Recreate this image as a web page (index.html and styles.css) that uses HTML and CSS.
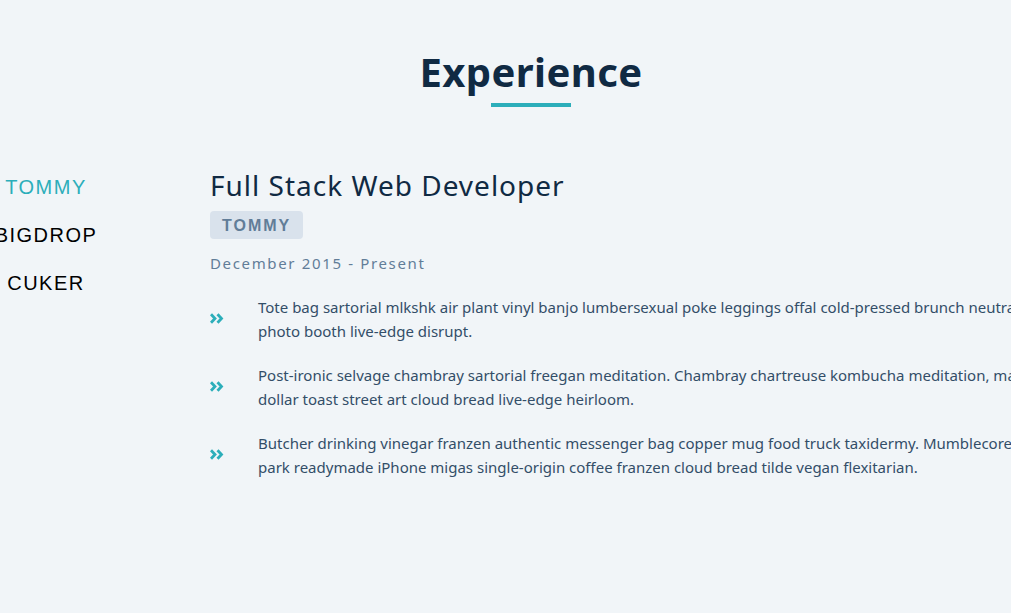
FILE: index.html
```html
<!DOCTYPE html>
<html lang="en">
<head>
<meta charset="utf-8">
<title>Experience</title>
<link rel="stylesheet" href="styles.css">
</head>
<body>
<section class="section">
  <div class="title">
    <h2>Experience</h2>
    <div class="underline"></div>
  </div>
  <div class="jobs-center">
    <div class="btn-container">
      <button class="job-btn active-btn">TOMMY</button>
      <button class="job-btn">BIGDROP</button>
      <button class="job-btn">CUKER</button>
    </div>
    <article class="job-info">
      <h3>Full Stack Web Developer</h3>
      <h4>TOMMY</h4>
      <p class="job-date">December 2015 - Present</p>
      <div class="job-desc">
        <svg class="job-icon" viewBox="0 0 14 11" width="14" height="11"><path d="M1 1.2 L5 5.5 L1 9.8 M7.5 1.2 L11.5 5.5 L7.5 9.8" fill="none" stroke="currentColor" stroke-width="2.8"/></svg>
        <p>Tote bag sartorial mlkshk air plant vinyl banjo lumbersexual poke leggings offal cold-pressed brunch neutra. Hammock<br>photo booth live-edge disrupt.</p>
      </div>
      <div class="job-desc">
        <svg class="job-icon" viewBox="0 0 14 11" width="14" height="11"><path d="M1 1.2 L5 5.5 L1 9.8 M7.5 1.2 L11.5 5.5 L7.5 9.8" fill="none" stroke="currentColor" stroke-width="2.8"/></svg>
        <p>Post-ironic selvage chambray sartorial freegan meditation. Chambray chartreuse kombucha meditation, man bun four<br>dollar toast street art cloud bread live-edge heirloom.</p>
      </div>
      <div class="job-desc">
        <svg class="job-icon" viewBox="0 0 14 11" width="14" height="11"><path d="M1 1.2 L5 5.5 L1 9.8 M7.5 1.2 L11.5 5.5 L7.5 9.8" fill="none" stroke="currentColor" stroke-width="2.8"/></svg>
        <p>Butcher drinking vinegar franzen authentic messenger bag copper mug food truck taxidermy. Mumblecore lomo echo<br>park readymade iPhone migas single-origin coffee franzen cloud bread tilde vegan flexitarian.</p>
      </div>
    </article>
  </div>
</section>
</body>
</html>
```
FILE: styles.css
```css
* { box-sizing: border-box; margin: 0; padding: 0; }
html, body { height: 100%; }
body {
  background: #f1f5f8;
  font-family: "Noto Sans", "Open Sans", sans-serif;
  color: #334e68;
  overflow: hidden;
}
.section {
  width: 1200px;
  padding-top: 47px;
}
.title {
  width: 1062px;
  text-align: center;
}
.title h2 {
  font-size: 40px;
  font-weight: 700;
  letter-spacing: 0.4px;
  color: #102a43;
  line-height: 1.25;
}
.underline {
  width: 80px;
  height: 4px;
  background: #2caeba;
  margin: 6px auto 0;
}
.jobs-center {
  display: flex;
  margin-top: 56px;
}
.btn-container {
  width: 140px;
  margin-left: -24px;
  display: flex;
  flex-direction: column;
  align-items: center;
  flex-shrink: 0;
}
.job-btn {
  background: transparent;
  border: none;
  font-family: "Liberation Sans", Arial, sans-serif;
  font-size: 20px;
  letter-spacing: 1.5px;
  color: #000;
  height: 48px;
  line-height: 23px;
  padding: 0;
  cursor: pointer;
  white-space: nowrap;
}
.active-btn { color: #2caeba; }
.job-info {
  margin-left: 94px;
  padding-top: 6px;
}
.job-info h3 {
  font-weight: 400;
  font-size: 28px;
  letter-spacing: 1px;
  color: #102a43;
  line-height: 1.2;
}
.job-info h4 {
  display: inline-block;
  margin-top: 8px;
  background: #d9e2ec;
  color: #617d98;
  font-family: "Liberation Sans", Arial, sans-serif;
  font-weight: 700;
  font-size: 16px;
  letter-spacing: 2px;
  padding: 6px 12px 5px;
  border-radius: 4px;
  line-height: 17px;
}
.job-date {
  margin-top: 14px;
  font-size: 15px;
  letter-spacing: 1.65px;
  color: #627d98;
  line-height: 20px;
}
.job-desc {
  display: grid;
  grid-template-columns: 14px auto;
  column-gap: 34px;
  align-items: center;
  margin-top: 22px;
  width: 1000px;
}
.job-desc + .job-desc { margin-top: 20px; }
.job-icon { color: #2caeba; }
.job-desc p {
  font-size: 15px;
  line-height: 24px;
  color: #334e68;
  white-space: nowrap;
}
```
